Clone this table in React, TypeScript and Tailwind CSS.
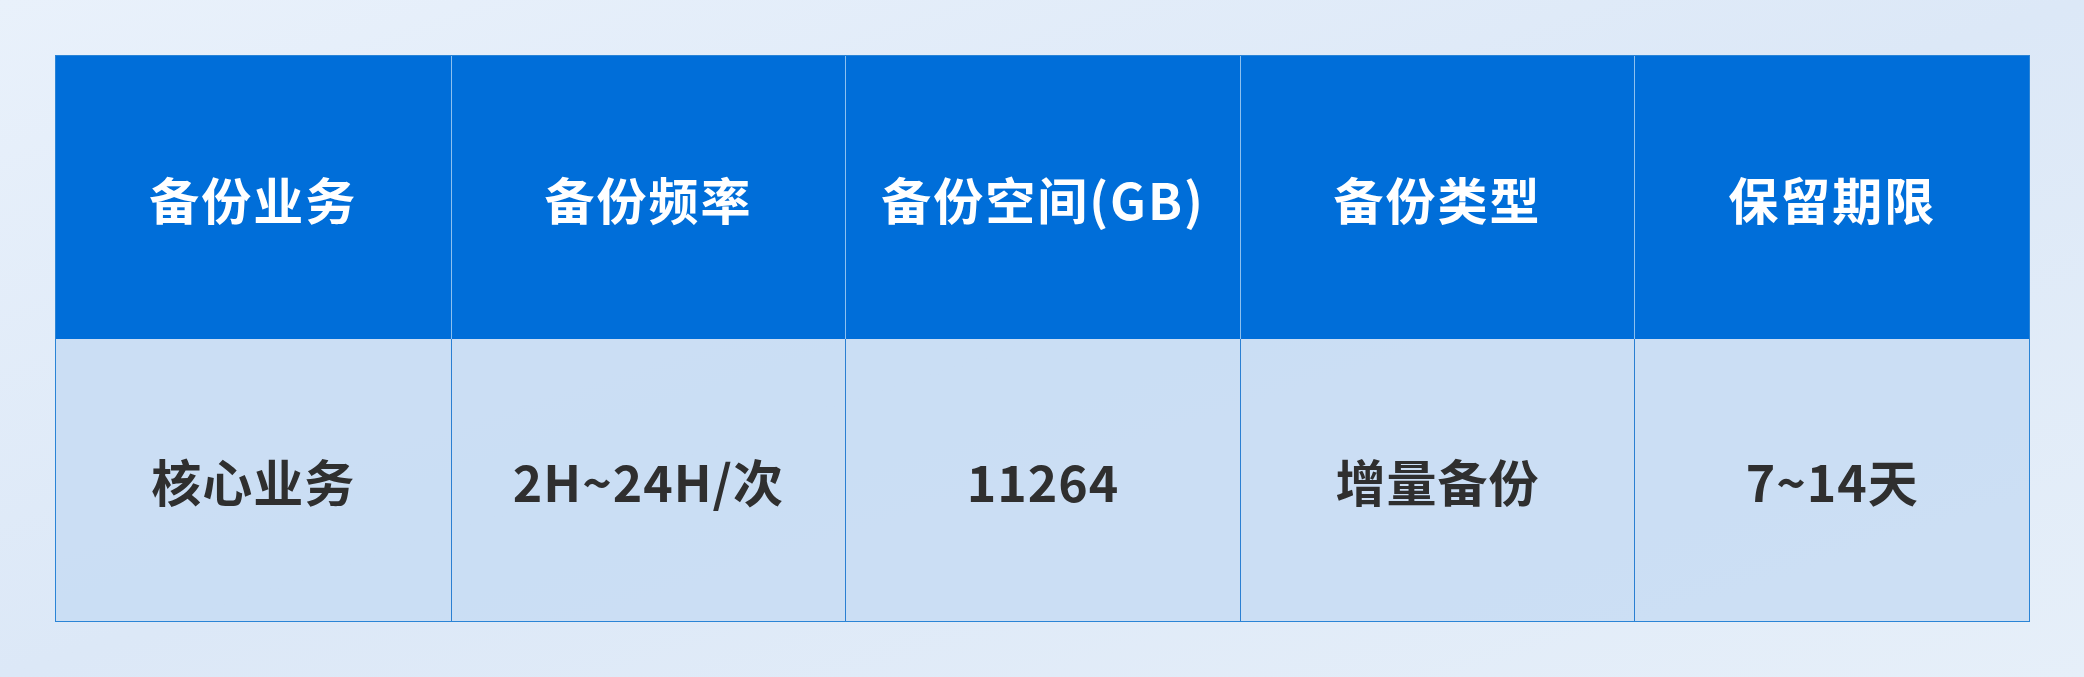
import React from "react";

const headers = ["备份业务", "备份频率", "备份空间(GB)", "备份类型", "保留期限"];
const row = ["核心业务", "2H~24H/次", "11264", "增量备份", "7~14天"];

export default function App() {
  return (
    <div
      className="w-[2084px] h-[677px] bg-gradient-to-br from-[#e9f1fb] via-[#dce8f7] to-[#e6eff9] pt-[55px] pl-[55px] relative overflow-hidden"
      style={{ fontFamily: '"Noto Sans CJK SC", "Noto Sans", sans-serif' }}
    >
      <div className="w-[1975px] border border-[#2a84d6]">
        <div className="grid grid-cols-5 h-[283px] bg-[#006ed9]">
          {headers.map((h, i) => (
            <div
              key={i}
              className={`flex items-center justify-center pt-[2px] text-white font-bold text-[50px] tracking-[2px] ${i > 0 ? "border-l border-[#8cc0ef]" : ""}`}
            >
              {h}
            </div>
          ))}
        </div>
        <div className="grid grid-cols-5 h-[282px] bg-[#c6dbf3]/80">
          {row.map((c, i) => (
            <div
              key={i}
              className={`flex items-center justify-center text-[#2f2f2f] font-bold text-[50px] tracking-[1px] ${i > 0 ? "border-l border-[#2a7fd2]" : ""}`}
            >
              {c}
            </div>
          ))}
        </div>
      </div>
    </div>
  );
}
